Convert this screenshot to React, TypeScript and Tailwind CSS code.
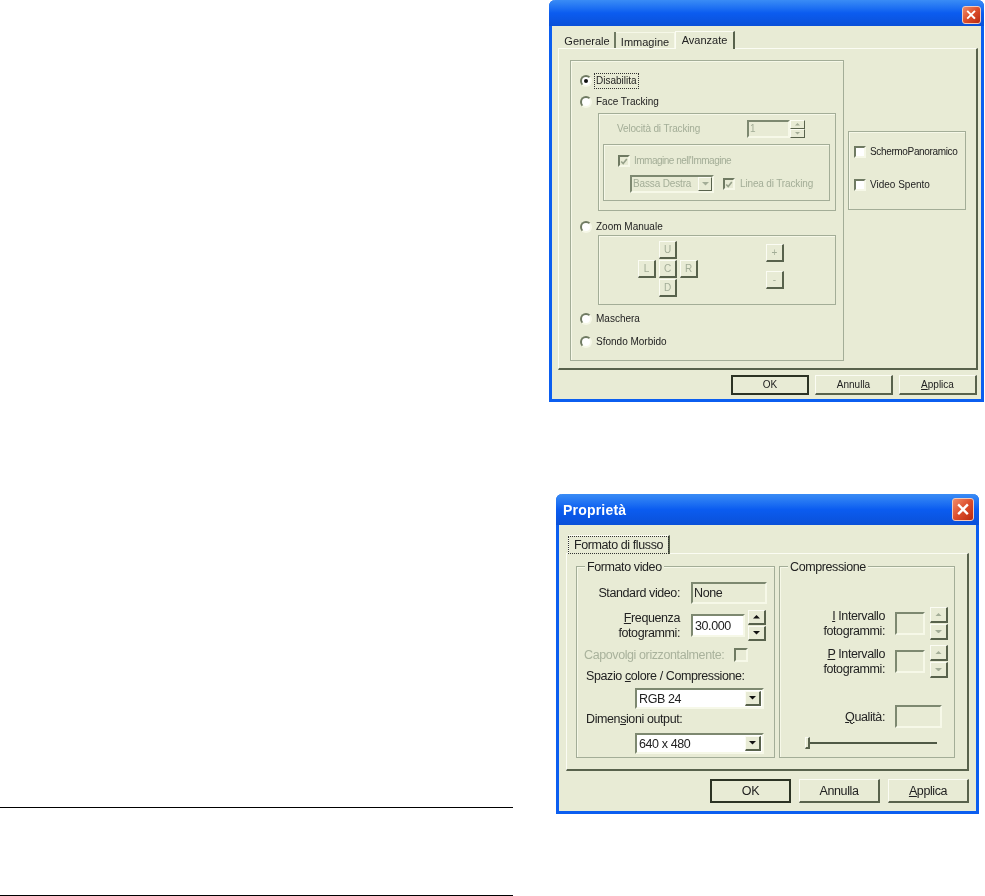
import * as React from "react";

const raised = "border border-t-[#fbfcf3] border-l-[#fbfcf3] border-r-[#58624c] border-b-[#58624c] bg-[#e8ebd5]";
const sunken = "border-2 border-t-[#7d8870] border-l-[#7d8870] border-r-[#f6f8e8] border-b-[#f6f8e8]";
const groupBox = "border border-[#a3ad97] shadow-[inset_1px_1px_0_#f6f8e8]";

function CloseButton({ className }: { className: string }) {
  return (
    <div className={`flex items-center justify-center rounded-[3px] border border-[#f3c9b8] bg-gradient-to-br from-[#ef8a68] via-[#dc4d2b] to-[#b9280f] ${className}`}>
      <svg viewBox="0 0 12 12" className="h-3/5 w-3/5">
        <path d="M2 2 L10 10 M10 2 L2 10" stroke="#fff" strokeWidth="2.4" strokeLinecap="square" />
      </svg>
    </div>
  );
}

function Arrow({ up, dim, size = 7 }: { up?: boolean; dim?: boolean; size?: number }) {
  return (
    <svg viewBox="0 0 8 4" width={size} height={size / 2}>
      <path d={up ? "M0 4 L4 0 L8 4 Z" : "M0 0 L8 0 L4 4 Z"} fill={dim ? "#a3ad97" : "#111"} />
    </svg>
  );
}

function Radio({ checked, focus, label }: { checked?: boolean; focus?: boolean; label: string }) {
  return (
    <div className="flex h-4 items-center pl-[9px]">
      <div className="flex h-[12px] w-[12px] items-center justify-center rounded-full border-2 border-t-[#6f7a62] border-l-[#6f7a62] border-r-[#f6f8e8] border-b-[#f6f8e8] bg-white">
        {checked && <div className="h-[4px] w-[4px] rounded-full bg-[#111]" />}
      </div>
      <span className={`ml-[3px] px-[1px] ${focus ? "outline-1 outline-dotted outline-[#333]" : ""}`}>
        {label}
      </span>
    </div>
  );
}

function Check({ disabled, checked, className = "h-[12px] w-[12px]" }: { disabled?: boolean; checked?: boolean; className?: string }) {
  return (
    <div className={`flex shrink-0 items-center justify-center border-2 border-t-[#6f7a62] border-l-[#6f7a62] border-r-[#f6f8e8] border-b-[#f6f8e8] ${disabled ? "bg-[#e8ebd5]" : "bg-white"} ${className}`}>
      {checked && (
        <svg viewBox="0 0 10 10" className="h-[9px] w-[9px]">
          <path d="M1.5 5 L4 7.5 L8.5 2" fill="none" stroke="#97a18a" strokeWidth="2" />
        </svg>
      )}
    </div>
  );
}

function Pad({ label, className = "" }: { label: string; className?: string }) {
  return (
    <div className={`flex h-[18px] w-[18px] items-center justify-center border-b-2 border-r-2 border-t border-l border-t-[#fbfcf3] border-l-[#fbfcf3] border-r-[#58624c] border-b-[#58624c] text-[10px] leading-none text-[#a3ad97] ${className}`}>
      {label}
    </div>
  );
}

function DialogButton({ label, hot, primary, size }: { label: string; hot?: string; primary?: boolean; size: string }) {
  return (
    <div className={`flex items-center justify-center text-[#222] ${size} ${primary ? "border-2 border-[#2c3324]" : "border border-t-[#fbfcf3] border-l-[#fbfcf3] border-r-[#58624c] border-b-[#58624c] border-b-2 border-r-2"}`}>
      {hot && <span className="underline">{hot}</span>}
      {label}
    </div>
  );
}

function AdvancedDialog() {
  return (
    <div className="h-[402px] w-[435px] whitespace-nowrap rounded-t-[6px] border-x-[3px] border-b-[3px] border-[#0b5ef0] bg-[#e8ebd5] font-['Liberation_Sans',sans-serif] text-[10px] leading-[14px] text-[#222] blur-[0.3px]">
      <div className="-mx-[3px] flex h-[26px] items-start justify-end rounded-t-[6px] bg-gradient-to-b from-[#3a8cf5] via-[#0b5cf0] to-[#0a50d8] pr-[3px] pt-[6px]">
        <CloseButton className="h-[18px] w-[19px]" />
      </div>

      <div className="flex h-[22px] items-end pl-[8px] text-[11px]">
        <div className="flex h-[16px] w-[56px] items-center justify-center border-r-2 border-[#6f7a62] pt-[2px]">Generale</div>
        <div className="flex h-[16px] w-[59px] items-center justify-center border-r border-t border-[#f6f8e8] pt-[2px]">Immagine</div>
        <div className="-mb-px flex h-[18px] w-[60px] items-start justify-center border-r-2 border-r-[#58624c] border-t border-l border-t-[#fbfcf3] border-l-[#fbfcf3] bg-[#e8ebd5] pt-[1px]">Avanzate</div>
      </div>

      <div className={`ml-[6px] flex h-[322px] w-[420px] border-b-2 border-r-2 ${raised}`}>
        <div className={`ml-[11px] mt-[11px] h-[301px] w-[274px] pt-[12px] ${groupBox}`}>
          <Radio checked focus label="Disabilita" />
          <div className="mt-[5px]">
            <Radio label="Face Tracking" />
          </div>

          <div className={`ml-[27px] mt-[3px] h-[98px] w-[238px] pt-[6px] tracking-[-0.15px] text-[#a3ad97] ${groupBox}`}>
            <div className="flex h-[18px] items-center pl-[18px]">
              <span className="w-[130px]">Velocità di Tracking</span>
              <div className={`flex h-[18px] w-[43px] items-center pl-[1px] ${sunken}`}>1</div>
              <div className="flex w-[15px] flex-col">
                <div className={`flex h-[9px] items-center justify-center ${raised}`}><Arrow up dim size={5} /></div>
                <div className={`flex h-[9px] items-center justify-center ${raised}`}><Arrow dim size={5} /></div>
              </div>
            </div>
            <div className={`ml-[4px] mt-[6px] h-[57px] w-[227px] pt-[8px] ${groupBox}`}>
              <div className="flex h-4 items-center pl-[14px]">
                <Check disabled checked />
                <span className="ml-[4px] tracking-[-0.5px]">Immagine nell'Immagine</span>
              </div>
              <div className="mt-[6px] flex items-center pl-[26px]">
                <div className={`flex h-[18px] w-[84px] items-center justify-between pl-[1px] ${sunken}`}>
                  Bassa Destra
                  <div className={`flex h-[14px] w-[14px] items-center justify-center ${raised}`}><Arrow dim size={7} /></div>
                </div>
                <Check disabled checked className="ml-[9px] h-[12px] w-[12px]" />
                <span className="ml-[5px]">Linea di Tracking</span>
              </div>
            </div>
          </div>

          <div className="mt-[8px]">
            <Radio label="Zoom Manuale" />
          </div>

          <div className={`ml-[27px] flex h-[70px] w-[238px] ${groupBox}`}>
            <div className="ml-[39px] mt-[5px] grid grid-cols-[18px_18px_18px] grid-rows-[18px_18px_18px] gap-x-[3px] gap-y-[1px]">
              <Pad label="U" className="col-start-2" />
              <Pad label="L" className="col-start-1" />
              <Pad label="C" />
              <Pad label="R" />
              <Pad label="D" className="col-start-2" />
            </div>
            <div className="ml-[68px] mt-[8px] flex flex-col gap-[9px]">
              <Pad label="+" />
              <Pad label="-" />
            </div>
          </div>

          <div className="mt-[6px]">
            <Radio label="Maschera" />
          </div>
          <div className="mt-[7px]">
            <Radio label="Sfondo Morbido" />
          </div>
        </div>

        <div className={`ml-[4px] mt-[82px] flex h-[79px] w-[118px] flex-col pl-[5px] pt-[12px] ${groupBox}`}>
          <div className="flex h-4 items-center">
            <Check />
            <span className="ml-[4px] tracking-[-0.35px]">SchermoPanoramico</span>
          </div>
          <div className="mt-[17px] flex h-4 items-center">
            <Check />
            <span className="ml-[4px]">Video Spento</span>
          </div>
        </div>
      </div>

      <div className="mt-[5px] flex justify-end gap-[6px] pr-[4px]">
        <DialogButton primary label="OK" size="h-[20px] w-[78px]" />
        <DialogButton label="Annulla" size="h-[20px] w-[78px]" />
        <DialogButton hot="A" label="pplica" size="h-[20px] w-[78px]" />
      </div>
    </div>
  );
}

function Legend({ children }: { children: string }) {
  return <span className="absolute -top-[8px] left-[8px] bg-[#e8ebd5] px-[2px] leading-[16px]">{children}</span>;
}

function Spin({ dim, heights }: { dim?: boolean; heights: string }) {
  return (
    <div className="flex w-[18px] flex-col gap-[1px]">
      <div className={`flex items-center justify-center border-b-2 border-r-2 ${heights} ${raised}`}><Arrow up dim={dim} /></div>
      <div className={`flex items-center justify-center border-b-2 border-r-2 ${heights} ${raised}`}><Arrow dim={dim} /></div>
    </div>
  );
}

function Combo({ value }: { value: string }) {
  return (
    <div className={`ml-[58px] flex h-[21px] w-[129px] items-center justify-between bg-white pl-[2px] pr-[1px] text-[#222] ${sunken}`}>
      {value}
      <div className={`flex h-[15px] w-[16px] items-center justify-center border-b-2 border-r-2 ${raised}`}><Arrow /></div>
    </div>
  );
}

function IntervalRow({ letter, className = "" }: { letter: string; className?: string }) {
  return (
    <div className={`flex items-center ${className}`}>
      <div className="w-[105px] text-right leading-[15px]">
        <span className="underline">{letter}</span> Intervallo
        <br />
        fotogrammi:
      </div>
      <div className={`ml-[10px] h-[23px] w-[30px] ${sunken}`} />
      <div className="ml-[5px]">
        <Spin dim heights="h-[16px]" />
      </div>
    </div>
  );
}

function PropertiesDialog() {
  return (
    <div className="ml-[7px] mt-[92px] h-[320px] w-[423px] whitespace-nowrap rounded-t-[6px] border-x-[3px] border-b-[3px] border-[#0b5ef0] bg-[#e8ebd5] font-['Liberation_Sans',sans-serif] text-[12.5px] leading-[16px] tracking-[-0.4px] text-[#222] blur-[0.4px]">
      <div className="-mx-[3px] flex h-[31px] items-center justify-between rounded-t-[6px] bg-gradient-to-b from-[#3a8cf5] via-[#0b5cf0] to-[#0a50d8] pl-[7px] pr-[5px]">
        <span className="text-[14px] font-bold tracking-[0.2px] text-white">Proprietà</span>
        <CloseButton className="h-[23px] w-[22px]" />
      </div>

      <div className="flex h-[28px] items-end pl-[9px]">
        <div className="-mb-px flex h-[19px] w-[102px] items-center justify-center border-r-2 border-r-[#58624c] border-t border-l border-t-[#fbfcf3] border-l-[#fbfcf3] bg-[#e8ebd5]">
          <span className="px-[5px] outline-1 outline-dotted outline-[#333]">Formato di flusso</span>
        </div>
      </div>

      <div className={`ml-[7px] flex h-[218px] w-[403px] border-b-2 border-r-2 ${raised}`}>
        <div className={`relative ml-[9px] mt-[12px] h-[192px] w-[199px] pt-[15px] ${groupBox}`}>
          <Legend>Formato video</Legend>
          <div className="flex items-center">
            <div className="w-[103px] text-right">Standard video:</div>
            <div className={`ml-[11px] flex h-[22px] w-[76px] items-center pl-[1px] ${sunken}`}>None</div>
          </div>
          <div className="mt-[6px] flex items-center">
            <div className="w-[103px] text-right leading-[15px]">
              <span className="underline">F</span>requenza
              <br />
              fotogrammi:
            </div>
            <div className={`ml-[11px] flex h-[23px] w-[54px] items-center bg-white pl-[2px] ${sunken}`}>30.000</div>
            <div className="ml-[3px]">
              <Spin heights="h-[15px]" />
            </div>
          </div>
          <div className="mt-[6px] flex h-[16px] items-center pl-[7px] text-[#a9b29c]">
            <span className="w-[150px]">Capovolgi orizzontalmente:</span>
            <Check disabled className="h-[14px] w-[14px]" />
          </div>
          <div className="mt-[5px] h-4 pl-[9px]">
            Spazio <span className="underline">c</span>olore / Compressione:
          </div>
          <div className="mt-[4px]">
            <Combo value="RGB 24" />
          </div>
          <div className="mt-[2px] h-4 pl-[9px]">
            Dimen<span className="underline">s</span>ioni output:
          </div>
          <div className="mt-[6px]">
            <Combo value="640 x 480" />
          </div>
        </div>

        <div className={`relative ml-[4px] mt-[12px] h-[192px] w-[176px] pt-[40px] ${groupBox}`}>
          <Legend>Compressione</Legend>
          <IntervalRow letter="I" />
          <IntervalRow letter="P" className="mt-[5px]" />
          <div className="mt-[27px] flex items-center">
            <div className="w-[105px] text-right">
              <span className="underline">Q</span>ualità:
            </div>
            <div className={`ml-[10px] h-[23px] w-[47px] ${sunken}`} />
          </div>
          <div className="ml-[25px] mt-[9px] flex h-[12px] w-[132px] items-center">
            <div className={`h-[12px] w-[5px] shrink-0 border-b-2 border-r-2 ${raised}`} />
            <div className="h-[2px] flex-1 bg-[#4f5945]" />
          </div>
        </div>
      </div>

      <div className="mt-[8px] flex justify-end gap-[8px] pr-[7px]">
        <DialogButton primary label="OK" size="h-[24px] w-[81px]" />
        <DialogButton label="Annulla" size="h-[24px] w-[81px]" />
        <DialogButton hot="A" label="pplica" size="h-[24px] w-[81px]" />
      </div>
    </div>
  );
}

export default function App() {
  return (
    <div className="flex h-[896px] w-[985px] overflow-hidden bg-white">
      <div className="w-[513px] shrink-0 pt-[807px]">
        <div className="h-px bg-black" />
        <div className="mt-[87px] h-px bg-black" />
      </div>
      <div className="ml-[36px] flex flex-col">
        <AdvancedDialog />
        <PropertiesDialog />
      </div>
    </div>
  );
}
